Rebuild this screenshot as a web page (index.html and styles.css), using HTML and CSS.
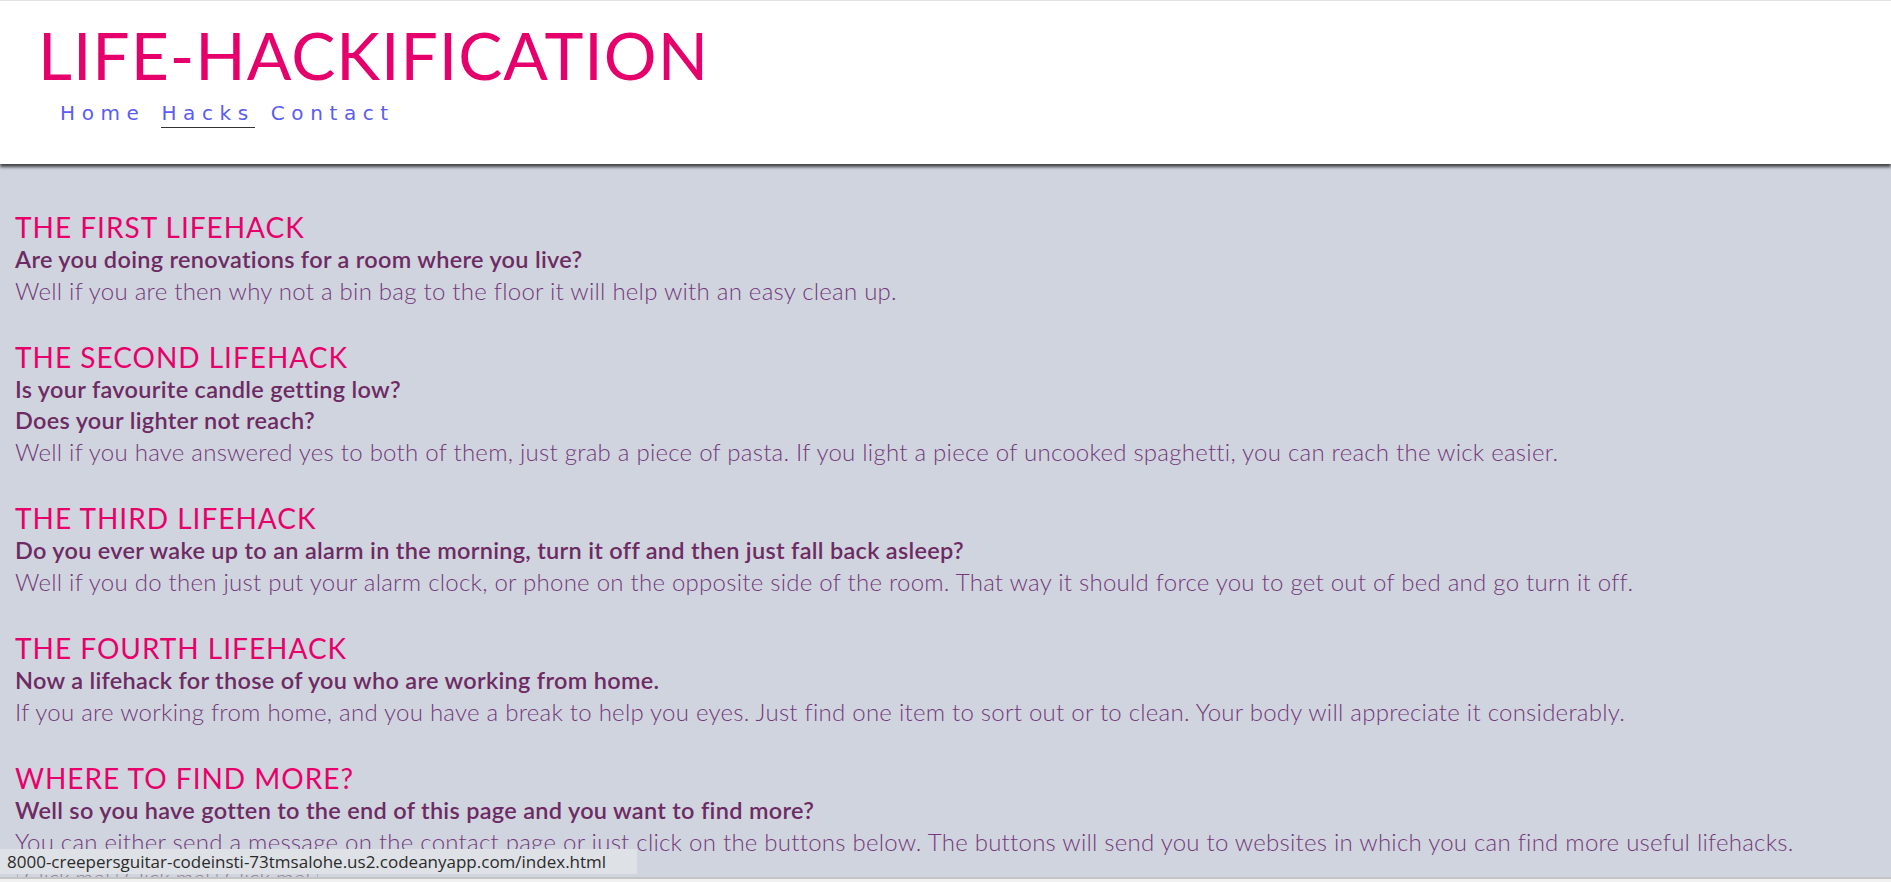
FILE: index.html
```html
<!DOCTYPE html>
<html lang="en">
<head>
<meta charset="utf-8">
<title>Life-Hackification</title>
<link rel="stylesheet" href="styles.css">
</head>
<body>
<header class="site-header">
  <h1 class="logo">LIFE-HACKIFICATION</h1>
  <nav class="nav">
    <a class="nav-link" href="#">Home</a>
    <a class="nav-link active" href="#">Hacks</a>
    <a class="nav-link" href="#">Contact</a>
  </nav>
</header>
<main class="content">
  <section class="hack">
    <h2 class="hack-title">THE FIRST LIFEHACK</h2>
    <p class="question">Are you doing renovations for a room where you live?</p>
    <p class="answer">Well if you are then why not a bin bag to the floor it will help with an easy clean up.</p>
  </section>
  <section class="hack">
    <h2 class="hack-title">THE SECOND LIFEHACK</h2>
    <p class="question">Is your favourite candle getting low?</p>
    <p class="question">Does your lighter not reach?</p>
    <p class="answer">Well if you have answered yes to both of them, just grab a piece of pasta. If you light a piece of uncooked spaghetti, you can reach the wick easier.</p>
  </section>
  <section class="hack">
    <h2 class="hack-title">THE THIRD LIFEHACK</h2>
    <p class="question">Do you ever wake up to an alarm in the morning, turn it off and then just fall back asleep?</p>
    <p class="answer">Well if you do then just put your alarm clock, or phone on the opposite side of the room. That way it should force you to get out of bed and go turn it off.</p>
  </section>
  <section class="hack">
    <h2 class="hack-title">THE FOURTH LIFEHACK</h2>
    <p class="question">Now a lifehack for those of you who are working from home.</p>
    <p class="answer">If you are working from home, and you have a break to help you eyes. Just find one item to sort out or to clean. Your body will appreciate it considerably.</p>
  </section>
  <section class="hack">
    <h2 class="hack-title">WHERE TO FIND MORE?</h2>
    <p class="question">Well so you have gotten to the end of this page and you want to find more?</p>
    <p class="answer">You can either send a message on the contact page or just click on the buttons below. The buttons will send you to websites in which you can find more useful lifehacks.</p>
    <div class="buttons">
      <button class="btn">Click me!</button><button class="btn">Click me!</button><button class="btn">Click me!</button>
    </div>
  </section>
</main>
<div class="status-bar">8000-creepersguitar-codeinsti-73tmsalohe.us2.codeanyapp.com/index.html</div>
<div class="scroll-edge"></div>
</body>
</html>
```

FILE: styles.css
```css
html, body {
  margin: 0;
  padding: 0;
}
body {
  background: #d0d4df;
  font-family: Lato, "Noto Sans", sans-serif;
  border-top: 1px solid #e2e2e2;
}
.site-header {
  background: #ffffff;
  height: 163px;
  box-sizing: border-box;
  padding: 14px 0 0 38px;
  box-shadow: 0 3px 3px rgba(40, 40, 40, 0.85);
  position: relative;
  z-index: 1;
}
.logo {
  margin: 0;
  font-family: Lato, "Noto Sans", sans-serif;
  font-weight: 400;
  font-size: 66px;
  line-height: 80px;
  color: #e5006b;
  letter-spacing: 1px;
}
.nav {
  display: flex;
  gap: 16px;
  padding-left: 22px;
  margin-top: 6px;
}
.nav-link {
  font-family: "DejaVu Sans", Verdana, sans-serif;
  font-size: 20px;
  letter-spacing: 6.6px;
  color: #5b5cf2;
  text-decoration: none;
  line-height: 24px;
  padding-bottom: 2px;
  border-bottom: 1px solid transparent;
}
.nav-link.active {
  border-bottom-color: #333333;
}
.content {
  padding: 47px 16px 0 15px;
}
.hack {
  margin-bottom: 35px;
}
.hack-title {
  margin: 0;
  font-family: Lato, "Noto Sans", sans-serif;
  font-weight: 400;
  font-size: 28px;
  line-height: 33px;
  letter-spacing: 1px;
  color: #e8006a;
}
.question {
  margin: 0;
  font-size: 23.5px;
  line-height: 31px;
  font-weight: 600;
  letter-spacing: 0.3px;
  color: #6d2b63;
}
.answer {
  margin: 0;
  font-size: 24px;
  line-height: 31px;
  font-weight: 300;
  letter-spacing: 0.25px;
  color: #73397a;
}
.buttons {
  display: flex;
  padding-top: 6px;
  padding-left: 2px;
}
.btn {
  font-family: Lato, sans-serif;
  font-size: 22px;
  font-weight: 300;
  color: #8e7c92;
  background: transparent;
  border: 1px solid #b0b0b8;
  padding: 0 6px;
}
.status-bar {
  position: fixed;
  left: 0;
  bottom: 8px;
  width: 637px;
  height: 25px;
  box-sizing: border-box;
  padding: 0 0 0 7px;
  background: #dee1e6;
  color: #2b2b2b;
  font-family: "Open Sans", "Noto Sans", sans-serif;
  font-size: 17px;
  line-height: 25px;
  z-index: 5;
}
.scroll-edge {
  position: fixed;
  left: 0;
  right: 0;
  bottom: 0;
  height: 3px;
  background: #f1f1f1;
  border-top: 2px solid #c4c4c4;
  z-index: 6;
}
```
